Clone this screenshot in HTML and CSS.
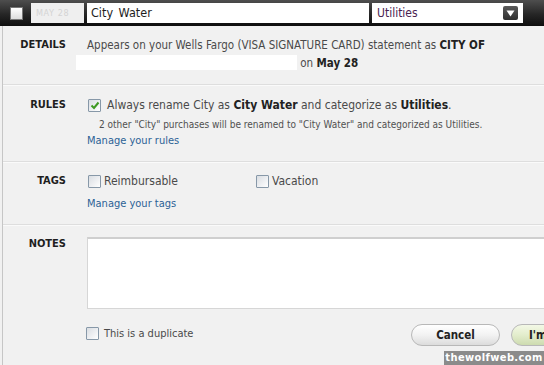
FILE: index.html
```html
<!DOCTYPE html>
<html>
<head>
<meta charset="utf-8">
<link rel="stylesheet" href="styles.css">
</head>
<body>
<div class="bar">
  <span class="bar-chk"></span>
  <div class="date">MAY 28</div>
  <div class="name">City Water</div>
  <div class="cat">
    <span class="cat-text">Utilities</span>
    <span class="arrow"><svg width="9" height="7" viewBox="0 0 9 7"><path d="M0.5 0.5 H8.5 L4.5 6.5 Z" fill="#fff"/></svg></span>
  </div>
</div>
<div class="panel">
  <section class="row details">
    <div class="label">DETAILS</div>
    <div class="content">
      <p class="desc">Appears on your Wells Fargo (VISA SIGNATURE CARD) statement as <b>CITY OF</b><br><span class="redact"></span> on <b>May 28</b></p>
    </div>
  </section>
  <section class="row rules">
    <div class="label">RULES</div>
    <div class="content">
      <div class="check-line"><span class="cb checked"><svg width="10" height="9" viewBox="0 0 10 9"><path d="M1.5 4.5 L4 7 L8.5 1.5" fill="none" stroke="#3f9a23" stroke-width="2"/></svg></span><span class="main">Always rename City as <b>City Water</b> and categorize as <b>Utilities</b>.</span></div>
      <div class="small">2 other "City" purchases will be renamed to "City Water" and categorized as Utilities.</div>
      <a class="link">Manage your rules</a>
    </div>
  </section>
  <section class="row tags">
    <div class="label">TAGS</div>
    <div class="content">
      <div class="tag-list">
        <label class="tag"><span class="cb"></span>Reimbursable</label>
        <label class="tag"><span class="cb"></span>Vacation</label>
      </div>
      <a class="link tags-link">Manage your tags</a>
    </div>
  </section>
  <section class="row notes">
    <div class="label">NOTES</div>
    <div class="content">
      <div class="textarea"></div>
    </div>
  </section>
  <div class="footer">
    <label class="dup"><span class="cb"></span>This is a duplicate</label>
    <button class="btn cancel">Cancel</button>
    <button class="btn ok">I'm</button>
  </div>
</div>
<div class="watermark">thewolfweb.com</div>
</body>
</html>
```
FILE: styles.css
```css
html, body {
  margin: 0;
  padding: 0;
}
body {
  width: 544px;
  height: 365px;
  overflow: hidden;
  position: relative;
  background: #f1f1f1;
  font-family: "DejaVu Sans Condensed", "DejaVu Sans", sans-serif;
  color: #4a4a4a;
}
.bar {
  height: 26px;
  background: linear-gradient(#4e4e4e, #262626 55%, #0e0e0e);
  display: flex;
  align-items: center;
  padding-left: 10px;
  box-sizing: border-box;
}
.bar-chk {
  width: 11px;
  height: 11px;
  border: 1px solid #777;
  background: linear-gradient(#ffffff, #dcdcdc);
}
.date {
  margin-left: 8px;
  width: 53px;
  height: 20px;
  box-sizing: border-box;
  background: #efefef;
  color: #d4d4d4;
  font-size: 9px;
  line-height: 20px;
  padding-left: 5px;
  letter-spacing: 0.6px;
}
.name {
  margin-left: 3px;
  width: 282px;
  height: 20px;
  box-sizing: border-box;
  background: #fff;
  color: #1e1e1e;
  font-size: 12.5px;
  line-height: 20px;
  padding-left: 4px;
  word-spacing: 2px;
}
.cat {
  margin-left: 3px;
  width: 151px;
  height: 20px;
  box-sizing: border-box;
  background: #fff;
  display: flex;
  align-items: center;
  justify-content: space-between;
  padding: 0 5px 0 5px;
}
.cat-text {
  color: #4a2452;
  font-size: 12px;
}
.arrow {
  width: 15px;
  height: 14px;
  border-radius: 2px;
  background: linear-gradient(#5a5a5a, #2e2e2e);
  display: flex;
  align-items: center;
  justify-content: center;
}
.panel {
  margin-left: 2px;
  border-left: 1px solid #c6c6c6;
  height: 339px;
}
.row {
  display: grid;
  grid-template-columns: 63px 1fr;
  column-gap: 21px;
  border-bottom: 1px solid #dedede;
  box-shadow: 0 1px 0 #fafafa;
}
.label {
  text-align: right;
  font-weight: bold;
  font-size: 11px;
  color: #1e1e1e;
  line-height: 18px;
}
.details {
  padding: 10px 0 12px;
}
.desc {
  margin: 0;
  font-size: 11.5px;
  line-height: 18px;
}
.desc b {
  color: #222;
}
.redact {
  display: inline-block;
  width: 221px;
  height: 15px;
  margin-left: -11px;
  background: #fff;
  vertical-align: -3px;
}
.rules {
  padding: 11px 0 12px;
}
.check-line {
  display: flex;
  align-items: center;
  font-size: 12px;
  line-height: 18px;
}
.check-line b {
  color: #222;
}
.cb {
  width: 11px;
  height: 11px;
  border: 1px solid #8798a8;
  border-radius: 1px;
  background: linear-gradient(135deg, #d9dde2, #ffffff);
  display: inline-flex;
  align-items: center;
  justify-content: center;
  flex: none;
}
.check-line .cb {
  margin: 0 6px 0 1px;
}
.small {
  font-size: 10px;
  line-height: 14px;
  margin: 4px 0 0 12px;
  color: #505050;
}
.link {
  display: block;
  color: #2c6296;
  font-size: 11px;
  line-height: 16px;
  margin-top: 1px;
}
.tags {
  padding: 10px 0 12px;
}
.tag-list {
  display: grid;
  grid-template-columns: 168px 1fr;
}
.tag {
  display: flex;
  align-items: center;
  gap: 3px;
  font-size: 12px;
  line-height: 18px;
  padding-left: 1px;
}
.tags-link {
  margin-top: 6px;
}
.notes {
  padding: 12px 0 0;
  border-bottom: none;
  box-shadow: none;
}
.notes .label {
  line-height: 14px;
}
.textarea {
  height: 69px;
  margin-right: -10px;
  background: #fff;
  border: 1px solid #d6d6d6;
  border-top: 2px solid #cfcfcf;
  border-right: none;
}
.footer {
  display: grid;
  grid-template-columns: 314px 89px 89px;
  column-gap: 11px;
  padding: 15px 0 0 83px;
  align-items: center;
  width: 700px;
}
.dup {
  display: flex;
  align-items: center;
  gap: 5px;
  font-size: 11px;
  color: #4a4a4a;
  margin-top: -4px;
}
.btn {
  height: 22px;
  border-radius: 11px;
  border: 1px solid #b8b8b8;
  font-family: "DejaVu Sans Condensed", "DejaVu Sans", sans-serif;
  font-weight: bold;
  font-size: 11.5px;
  color: #222;
  padding: 0;
  text-align: center;
}
.cancel {
  background: linear-gradient(#ffffff, #f2f2f2 50%, #dcdcdc);
}
.ok {
  background: linear-gradient(#f3f8e6, #e3edcc 50%, #cddbb0);
  text-align: left;
  padding-left: 17px;
}
.watermark {
  position: absolute;
  right: 0;
  bottom: 0;
  width: 100px;
  height: 14px;
  background: #8b8b8b;
  color: #fff;
  font-family: "DejaVu Sans Condensed", "DejaVu Sans", sans-serif;
  font-weight: bold;
  font-size: 11px;
  line-height: 14px;
  text-align: center;
  letter-spacing: 0.4px;
}
```
